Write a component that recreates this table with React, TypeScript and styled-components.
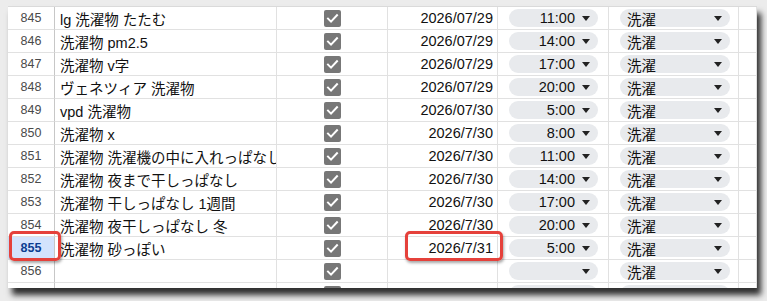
import React from 'react';
import styled, { createGlobalStyle } from 'styled-components';

const GlobalStyle = createGlobalStyle`
  html, body {
    margin: 0;
    padding: 0;
    background: #ececec;
  }
`;

const FONT = `"Liberation Sans", Arial, "Noto Sans CJK JP", sans-serif`;

const Page = styled.div`
  width: 767px;
  height: 301px;
  padding: 6px 0 0 8px;
  box-sizing: border-box;
  background: #ececec;
  overflow: hidden;
`;

const Sheet = styled.div`
  width: 749px;
  height: 282px;
  background: #fff;
  border-top: 1px solid #dadada;
  box-sizing: border-box;
  box-shadow: 4px 7px 6px rgba(0, 0, 0, 0.8);
  overflow: hidden;
  font-family: ${FONT};
`;

const Row = styled.div`
  display: grid;
  grid-template-columns: 47px 222px 111px 110px 111px 130px 18px;
  height: 23px;
`;

const Cell = styled.div<{ $align?: 'left' | 'right' | 'center' }>`
  position: relative;
  display: flex;
  align-items: center;
  justify-content: ${p => (p.$align === 'right' ? 'flex-end' : p.$align === 'center' ? 'center' : 'flex-start')};
  border-right: 1px solid #e1e1e1;
  border-bottom: 1px solid #e1e1e1;
  box-sizing: border-box;
  min-width: 0;
  overflow: visible;
  font-size: 14.5px;
  color: #111;
  white-space: nowrap;
`;

const HeaderCell = styled(Cell)<{ $selected?: boolean }>`
  justify-content: center;
  font-size: 12.5px;
  color: ${p => (p.$selected ? '#0b3d91' : '#4a4a4a')};
  font-weight: ${p => (p.$selected ? 700 : 400)};
  background: ${p => (p.$selected ? '#d3e3fd' : '#fff')};
  border-right: 1px solid #c7c7c7;
`;

const TitleCell = styled(Cell)`
  padding-left: 5px;
  overflow: hidden;
`;

const DateCell = styled(Cell)`
  padding-right: 4px;
`;

const Highlight = styled.div<{ $top: number; $right: number; $bottom: number; $left: number }>`
  position: absolute;
  top: ${p => p.$top}px;
  right: ${p => p.$right}px;
  bottom: ${p => p.$bottom}px;
  left: ${p => p.$left}px;
  border: 3px solid #e5413b;
  border-radius: 5px;
  box-shadow: 1px 2px 3px rgba(0, 0, 0, 0.35);
  pointer-events: none;
  z-index: 2;
`;

const Check = styled.div`
  width: 17px;
  height: 17px;
  border-radius: 2px;
  background: #777;
  display: flex;
  align-items: center;
  justify-content: center;
`;

const Pill = styled.div<{ $kind: 'time' | 'category' }>`
  display: flex;
  align-items: center;
  justify-content: ${p => (p.$kind === 'time' ? 'flex-end' : 'space-between')};
  gap: 7px;
  height: 18px;
  width: ${p => (p.$kind === 'time' ? '89px' : '110px')};
  margin-left: 11px;
  padding: 0 8px 0 7px;
  box-sizing: border-box;
  border-radius: 9px;
  background: #e8eaed;
  font-size: 14.5px;
  color: #111;
`;

const Arrow = styled.span`
  width: 0;
  height: 0;
  border-left: 4.5px solid transparent;
  border-right: 4.5px solid transparent;
  border-top: 5px solid #222;
  flex-shrink: 0;
`;

type Item = {
  num: number;
  title: string;
  date: string;
  time: string;
  category: string;
};

const items: Item[] = [
  { num: 845, title: 'lg 洗濯物 たたむ', date: '2026/07/29', time: '11:00', category: '洗濯' },
  { num: 846, title: '洗濯物 pm2.5', date: '2026/07/29', time: '14:00', category: '洗濯' },
  { num: 847, title: '洗濯物 v字', date: '2026/07/29', time: '17:00', category: '洗濯' },
  { num: 848, title: 'ヴェネツィア 洗濯物', date: '2026/07/29', time: '20:00', category: '洗濯' },
  { num: 849, title: 'vpd 洗濯物', date: '2026/07/30', time: '5:00', category: '洗濯' },
  { num: 850, title: '洗濯物 x', date: '2026/7/30', time: '8:00', category: '洗濯' },
  { num: 851, title: '洗濯物 洗濯機の中に入れっぱなし', date: '2026/7/30', time: '11:00', category: '洗濯' },
  { num: 852, title: '洗濯物 夜まで干しっぱなし', date: '2026/7/30', time: '14:00', category: '洗濯' },
  { num: 853, title: '洗濯物 干しっぱなし 1週間', date: '2026/7/30', time: '17:00', category: '洗濯' },
  { num: 854, title: '洗濯物 夜干しっぱなし 冬', date: '2026/7/30', time: '20:00', category: '洗濯' },
  { num: 855, title: '洗濯物 砂っぽい', date: '2026/7/31', time: '5:00', category: '洗濯' },
  { num: 856, title: '', date: '', time: '', category: '洗濯' },
  { num: 857, title: '', date: '', time: '', category: '洗濯' },
];

const CheckBox = () => (
  <Check>
    <svg width="13" height="13" viewBox="0 0 13 13">
      <polyline points="2,6.6 5,9.6 11,3.2" fill="none" stroke="#fff" strokeWidth="2" strokeLinecap="square" />
    </svg>
  </Check>
);

export default function App() {
  return (
    <Page>
      <GlobalStyle />
      <Sheet>
        {items.map(item => {
          const selected = item.num === 855;
          return (
            <Row key={item.num}>
              <HeaderCell $selected={selected}>
                {item.num}
                {selected && <Highlight $top={-6} $right={-7} $bottom={-2} $left={1} />}
              </HeaderCell>
              <TitleCell>{item.title}</TitleCell>
              <Cell $align="center">
                <CheckBox />
              </Cell>
              <DateCell $align="right">
                {item.date}
                {selected && <Highlight $top={-6} $right={-6} $bottom={-2} $left={17} />}
              </DateCell>
              <Cell>
                <Pill $kind="time">
                  {item.time}
                  <Arrow />
                </Pill>
              </Cell>
              <Cell>
                <Pill $kind="category">
                  {item.category}
                  <Arrow />
                </Pill>
              </Cell>
              <Cell />
            </Row>
          );
        })}
      </Sheet>
    </Page>
  );
}
